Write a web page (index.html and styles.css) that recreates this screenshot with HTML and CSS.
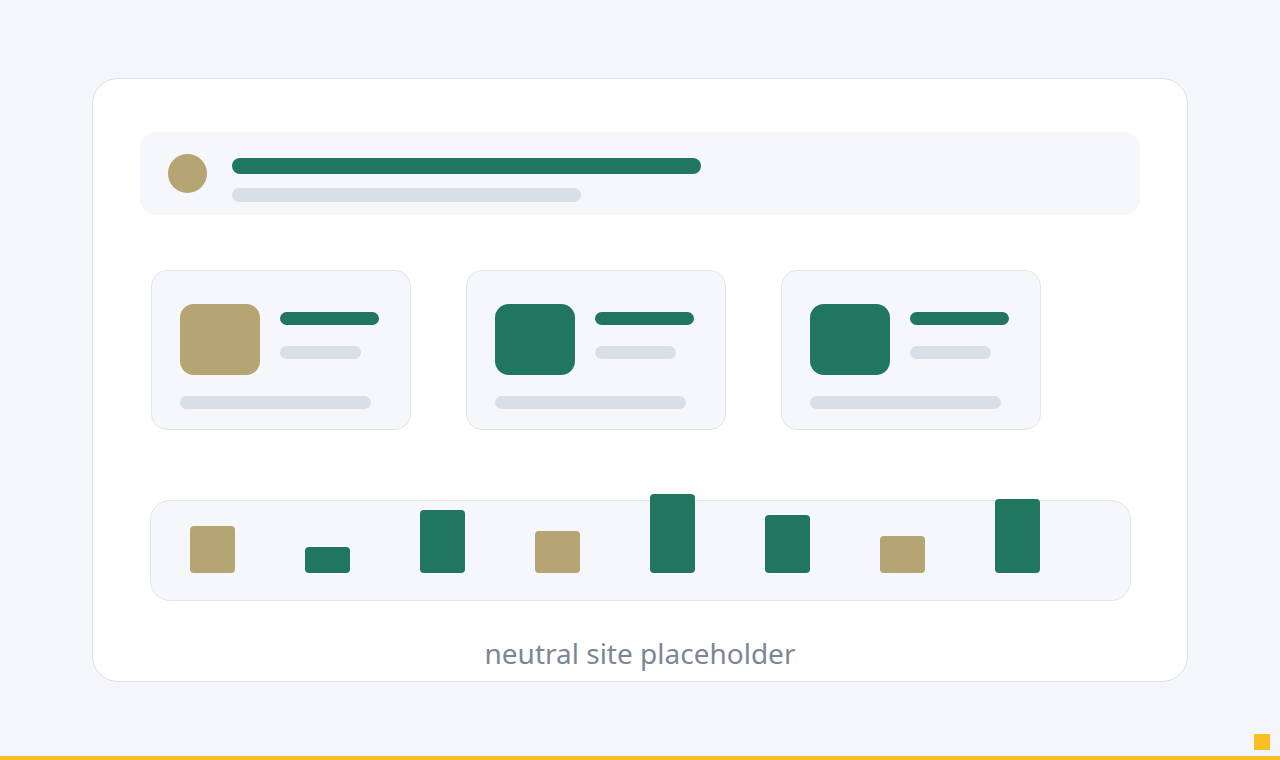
FILE: index.html
```html
<!DOCTYPE html>
<html>
<head>
<meta charset="utf-8">
<link rel="stylesheet" href="styles.css">
</head>
<body>
<div class="page">
  <div class="frame">
    <div class="header">
      <div class="avatar"></div>
      <div class="head-lines">
        <div class="line green" style="width:469px"></div>
        <div class="line grey" style="width:349px"></div>
      </div>
    </div>
    <div class="cards">
      <div class="card">
        <div class="card-top">
          <div class="thumb tan"></div>
          <div class="card-lines">
            <div class="bar green w99"></div>
            <div class="bar grey w81"></div>
          </div>
        </div>
        <div class="bar grey w191"></div>
      </div>
      <div class="card">
        <div class="card-top">
          <div class="thumb green"></div>
          <div class="card-lines">
            <div class="bar green w99"></div>
            <div class="bar grey w81"></div>
          </div>
        </div>
        <div class="bar grey w191"></div>
      </div>
      <div class="card">
        <div class="card-top">
          <div class="thumb green"></div>
          <div class="card-lines">
            <div class="bar green w99"></div>
            <div class="bar grey w81"></div>
          </div>
        </div>
        <div class="bar grey w191"></div>
      </div>
    </div>
    <div class="chart">
      <div class="col tan" style="height:47px"></div>
      <div class="col green" style="height:26px"></div>
      <div class="col green" style="height:63px"></div>
      <div class="col tan" style="height:42px"></div>
      <div class="col green" style="height:79px"></div>
      <div class="col green" style="height:58px"></div>
      <div class="col tan" style="height:37px"></div>
      <div class="col green" style="height:74px"></div>
    </div>
    <div class="caption">neutral site placeholder</div>
  </div>
  <div class="marker"></div>
  <div class="baseline"></div>
</div>
</body>
</html>
```
FILE: styles.css
```css
html, body {
  margin: 0;
  padding: 0;
  background: #f5f6f9;
}
.page {
  position: relative;
  width: 1280px;
  height: 760px;
  display: flex;
  align-items: center;
  justify-content: center;
  font-family: "Noto Sans", "Open Sans", sans-serif;
}
.frame {
  box-sizing: border-box;
  width: 1096px;
  height: 604px;
  background: #ffffff;
  border: 1px solid #dde2e8;
  border-radius: 26px;
  padding: 53px 47px 0 47px;
  display: flex;
  flex-direction: column;
}
.green { background: #20775e; }
.tan { background: #b4a572; }
.grey { background: #d9dfe6; }
.header {
  flex: none;
  height: 83px;
  box-sizing: border-box;
  background: #f5f7fa;
  border-radius: 16px;
  padding: 22px 28px;
  display: flex;
  align-items: flex-start;
  gap: 25px;
}
.avatar {
  width: 39px;
  height: 39px;
  border-radius: 50%;
  background: #b4a572;
}
.head-lines {
  margin-top: 4px;
  display: flex;
  flex-direction: column;
  gap: 14px;
}
.line { border-radius: 8px; }
.line.green { height: 16px; }
.line.grey { height: 14px; }
.cards {
  flex: none;
  margin: 55px 0 0 11px;
  display: flex;
  gap: 55px;
}
.card {
  box-sizing: border-box;
  width: 260px;
  height: 160px;
  background: #f5f7fa;
  border: 1px solid #e2e6eb;
  border-radius: 16px;
  padding: 33px 28px 19px;
  display: flex;
  flex-direction: column;
  gap: 21px;
}
.card-top {
  flex: none;
  display: flex;
  gap: 20px;
}
.thumb {
  width: 80px;
  height: 71px;
  border-radius: 14px;
}
.card-lines {
  padding-top: 8px;
  display: flex;
  flex-direction: column;
  gap: 21px;
}
.bar { flex: none; height: 13px; border-radius: 7px; }
.w99 { width: 99px; }
.w81 { width: 81px; }
.w191 { width: 191px; }
.chart {
  flex: none;
  box-sizing: border-box;
  margin: 70px 0 0 10px;
  width: 981px;
  height: 101px;
  background: #f5f7fa;
  border: 1px solid #e2e6eb;
  border-radius: 20px;
  padding: 0 0 27px 39px;
  display: flex;
  align-items: flex-end;
  gap: 70px;
}
.col {
  width: 45px;
  flex: none;
  border-radius: 4px;
}
.caption {
  margin-top: 33px;
  text-align: center;
  font-size: 28px;
  line-height: 38px;
  color: #7d8697;
}
.marker {
  position: absolute;
  left: 1254px;
  top: 734px;
  width: 16px;
  height: 16px;
  background: #fbbf24;
}
.baseline {
  position: absolute;
  left: 0;
  bottom: 0;
  width: 1280px;
  height: 4px;
  background: #fbbf24;
}
```
